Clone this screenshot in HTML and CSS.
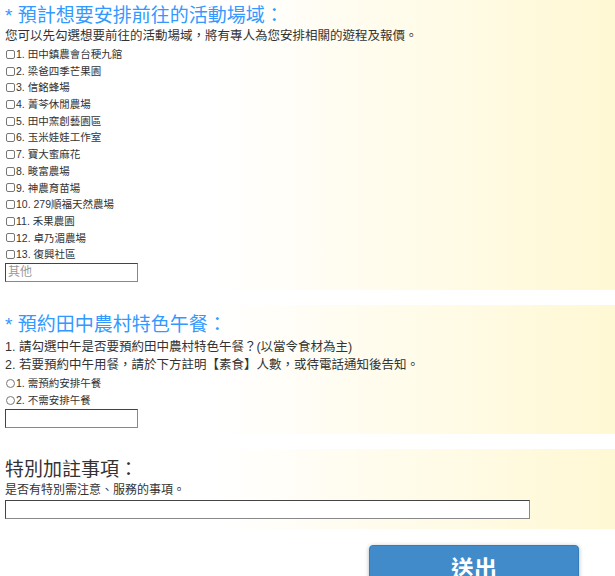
FILE: index.html
```html
<!DOCTYPE html>
<html lang="zh-Hant">
<head>
  <meta charset="UTF-8" />
  <title>活動預約</title>
  <link rel="stylesheet" href="styles.css">
</head>
<body>

<form class="booking">

<div class="block block-places">
  <h2 class="ask"><span class="star">*</span> 預計想要安排前往的活動場域：</h2>
  <p class="hint">您可以先勾選想要前往的活動場域，將有專人為您安排相關的遊程及報價。</p>
  <div class="choices">
    <label class="choice"><input type="checkbox" name="place">1. 田中鎮農會台稉九館</label>
    <label class="choice"><input type="checkbox" name="place">2. 梁爸四季芒果園</label>
    <label class="choice"><input type="checkbox" name="place">3. 信銘蜂場</label>
    <label class="choice"><input type="checkbox" name="place">4. 菁芩休閒農場</label>
    <label class="choice"><input type="checkbox" name="place">5. 田中窯創藝園區</label>
    <label class="choice"><input type="checkbox" name="place">6. 玉米娃娃工作室</label>
    <label class="choice"><input type="checkbox" name="place">7. 寶大蜜麻花</label>
    <label class="choice"><input type="checkbox" name="place">8. 畯富農場</label>
    <label class="choice"><input type="checkbox" name="place">9. 神農育苗場</label>
    <label class="choice"><input type="checkbox" name="place">10. 279順福天然農場</label>
    <label class="choice"><input type="checkbox" name="place">11. 禾果農園</label>
    <label class="choice"><input type="checkbox" name="place">12. 卓乃湄農場</label>
    <label class="choice"><input type="checkbox" name="place">13. 復興社區</label>
  </div>
  <input class="field field-short" type="text" placeholder="其他">
</div>

<div class="block block-lunch">
  <h2 class="ask"><span class="star">*</span> 預約田中農村特色午餐：</h2>
  <p class="note">1. 請勾選中午是否要預約田中農村特色午餐？(以當令食材為主)</p>
  <p class="note">2. 若要預約中午用餐，請於下方註明【素食】人數，或待電話通知後告知。</p>
  <div class="choices radios">
    <label class="choice"><input type="radio" name="lunch">1. 需預約安排午餐</label>
    <label class="choice"><input type="radio" name="lunch">2. 不需安排午餐</label>
  </div>
  <input class="field field-short" type="text">
</div>

<div class="block block-extra">
  <h2 class="ask plain">特別加註事項：</h2>
  <p class="hint small">是否有特別需注意、服務的事項。</p>
  <input class="field field-long" type="text">
</div>

<div class="actions">
  <button class="send" type="button">送出</button>
</div>

</form>

</body>
</html>
```

FILE: styles.css
```css
body { margin: 0; font-family: 'Liberation Sans', 'Noto Sans CJK TC', sans-serif; color: #333; background: #fff; }
.booking { display: flex; flex-direction: column; gap: 15px; }
.block { padding: 4px 5px 8px; background: linear-gradient(to right, #fff 35%, #fff8d4 100%); }
.block-lunch { padding-top: 8px; padding-bottom: 6px; }
.block-extra { padding-top: 9px; padding-bottom: 10px; }
.ask { margin: 0; font-size: 19px; line-height: 24px; font-weight: normal; color: #3399ff; }
.ask.plain { color: #333; }
.hint { margin: 0; font-size: 12.5px; line-height: 16px; }
.hint.small { font-size: 12px; }
.note { margin: 0; font-size: 12.5px; line-height: 18px; }
.block-lunch .note:first-of-type { margin-top: 1px; }
.choices { display: flex; flex-direction: column; padding-top: 2px; }
.radios { padding-top: 1px; }
.choice { display: flex; align-items: center; font-size: 10.5px; line-height: 16.7px; height: 16.7px; }
.radios .choice { height: 17px; line-height: 17px; }
.choice input { appearance: none; margin: 0 1px 0 1px; width: 9px; height: 9px; border: 1px solid #777; border-radius: 2px; background: #fff; }
.choice input[type=radio] { border-radius: 50%; }
.field { display: block; box-sizing: border-box; height: 19px; margin: 0; padding: 0 2px; border: 1px solid; border-color: #444 #888 #888 #444; font: 12px 'Liberation Sans', 'Noto Sans CJK TC', sans-serif; background: #fff; }
.field::placeholder { color: #999; }
.field-short { width: 133px; }
.field-long { width: 525px; margin-top: 2px; }
.actions { padding: 1px 0 0 369px; }
.send { display: block; width: 210px; height: 44px; border: 1px solid #357ebd; border-radius: 4px; background: #428bca; color: #fff; font: bold 23px/24px 'Liberation Sans', 'Noto Sans CJK TC', sans-serif; box-shadow: 0 1px 4px rgba(0,0,0,0.3); padding: 5px 0 0; text-align: center; vertical-align: top; align-content: start; }
```
